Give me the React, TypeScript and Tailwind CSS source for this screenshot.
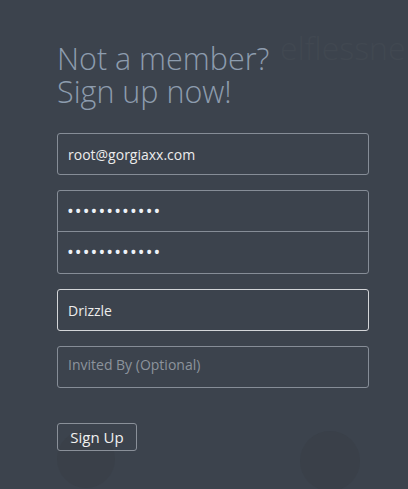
import React from "react";

const font = { fontFamily: '"Open Sans", "Noto Sans", sans-serif' };

export default function App() {
  return (
    <div className="relative h-[489px] w-[408px] overflow-hidden bg-[#3c434d]" style={font}>
      {/* faint background decorations */}
      <div className="pointer-events-none absolute left-[280px] top-[32px] text-[32px] font-light leading-none text-[#414851]">
        elflessne
      </div>
      <div className="pointer-events-none absolute left-[57px] top-[430px] h-[58px] w-[58px] rounded-full bg-[#3a4049]" />
      <div className="pointer-events-none absolute left-[300px] top-[431px] h-[60px] w-[60px] rounded-full bg-[#3a4049]" />

      <div className="relative flex flex-col pl-[57px] pt-[42px]">
        <h1 className="text-[30.5px] font-light leading-[33px] text-[#8d9cae]">
          Not a member?
          <br />
          Sign up now!
        </h1>

        <div className="mt-[25px] flex w-[312px] flex-col">
          <div className="flex h-[42px] items-center rounded-[3px] border border-[#868d97] px-[10px] text-[14px] text-[#ececec]">
            root@gorgiaxx.com
          </div>

          <div className="mt-[15px] flex flex-col rounded-[3px] border border-[#868d97]">
            <div className="flex h-[41px] items-center border-b border-[#868d97] px-[9px] text-[18px] tracking-[1.1px] text-[#eef2f8]">
              ••••••••••••
            </div>
            <div className="flex h-[41px] items-center px-[9px] text-[18px] tracking-[1.1px] text-[#eef2f8]">
              ••••••••••••
            </div>
          </div>

          <div className="mt-[15px] flex h-[42px] items-center rounded-[3px] border border-[#d3d5d8] px-[10px] text-[14px] text-[#ececec]">
            Drizzle
          </div>

          <div className="mt-[15px] flex h-[42px] items-start rounded-[3px] border border-[#868d97] px-[10px] pt-[7px] text-[14px] text-[#8c939c]">
            Invited By (Optional)
          </div>
        </div>

        <div className="mt-[35px]">
          <button className="flex h-[28px] w-[80px] items-center justify-center rounded-[3px] border border-[#8a9099] text-[15px] text-[#f0f0f0]">
            Sign Up
          </button>
        </div>
      </div>
    </div>
  );
}
